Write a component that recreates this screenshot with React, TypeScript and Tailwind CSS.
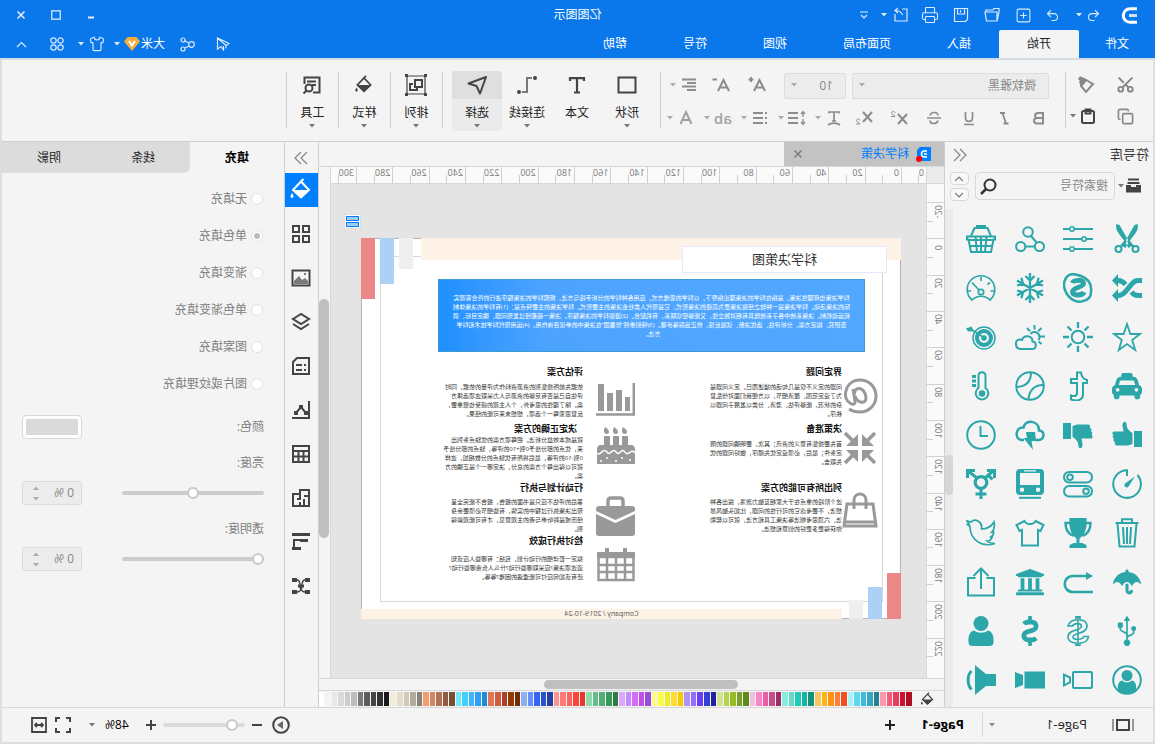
import type { ReactNode } from "react";
import { Copy, Printer, Redo2, Scissors, Shirt, SquarePlus, Undo2 } from "lucide-react";
import { FaTaxi, FaTrophy, FaUniversity, FaUsb, FaDollarSign, FaUmbrella } from "react-icons/fa";

type DrawProps = { children: ReactNode; size?: string; box?: number; sw?: number };

function Draw({ children, size = "size-6", box = 24, sw = 2 }: DrawProps) {
  return (
    <svg viewBox={`0 0 ${box} ${box}`} className={`${size} shrink-0`} fill="none" stroke="currentColor" strokeWidth={sw} aria-hidden="true">
      {children}
    </svg>
  );
}

function Caret({ className = "" }: { className?: string }) {
  return (
    <svg viewBox="0 0 6 4" className={`h-1 w-1.5 shrink-0 ${className}`} fill="currentColor" aria-hidden="true">
      <path d="M0 0h6L3 3.5z" />
    </svg>
  );
}

const solid = { fill: "currentColor", stroke: "none" };

const symbols: { name: string; art: ReactNode }[] = [
  {
    name: "scissors",
    art: (
      <>
        <path {...solid} d="M4.500 0c-1.500 4 .5 8 8 17l4 7 3-2L7.500 1zM25.500 0c1.500 4-.5 8-8 17l-4 7-3-2 12-21z" />
        <circle cx="6.500" cy="25" r="3" />
        <circle cx="23.500" cy="25" r="3" />
        <path d="M9 22.500l5-6M21 22.500l-5-6" strokeWidth="2.500" />
      </>
    ),
  },
  {
    name: "sliders",
    art: (
      <>
        <path d="M0 5h18.500M24 5h6M0 15h6M12 15h18M0 25h18.500M24 25h6" />
        <circle cx="21" cy="5" r="2.200" strokeWidth="1.600" />
        <circle cx="9" cy="15" r="2.200" strokeWidth="1.600" />
        <circle cx="21" cy="25" r="2.200" strokeWidth="1.600" />
      </>
    ),
  },
  {
    name: "nodes",
    art: (
      <>
        <circle cx="17" cy="8" r="4.800" />
        <circle cx="5.600" cy="22.500" r="4.600" />
        <circle cx="24.300" cy="22.500" r="4.600" />
        <path d="M14 12l-6 7M10.500 22.500h9" />
      </>
    ),
  },
  {
    name: "basket",
    art: (
      <>
        <path d="M5 12l3.500-8h13l3.500 8" />
        <path d="M10 2.500h10" strokeWidth="3" />
        <path d="M1 12.500h28v3h-1.500L25 28H5L2.500 15.500H1zM3 16h24M4 22h22M9.500 13l1.500 15M15 13v15M20.500 13L19 28" />
      </>
    ),
  },
  {
    name: "shuffle",
    art: (
      <>
        <path d="M0 7.500h4c3 0 5 2 7 4.500l6 7c2 2.500 4 3.500 7 3.500h1M0 22.500h4c3 0 5-1.500 6.500-3.500M16.500 11.500c2-2.500 4-4 7.500-4h1" strokeWidth="5" />
        <path {...solid} d="M24 1l6 6.500-6 6.500zM24 16l6 6.500-6 6.500z" />
      </>
    ),
  },
  {
    name: "skype",
    art: (
      <>
        <path d="M20 2c-4-2-14 0-18 11-2 5-1 12 4 15 4 2 8 .5 12-1 8-3 11-9 10-16 0-5-3-8-8-9z" strokeWidth="2.500" transform="rotate(180 15 15)" />
        <path d="M20.500 10c-1-3-10-4-11 0-.8 4.500 11 4 11 9 0 4-10 4-11.500 0" strokeWidth="5" />
      </>
    ),
  },
  {
    name: "snow",
    art: (
      <path
        d="M15 0v30M2 7.500l26 15M28 7.500l-26 15M10.500 3l4.500 4.500L19.500 3M10.500 27l4.500-4.500 4.500 4.500M2 12.500l6-1.700L6.400 4.700M28 17.500l-6 1.700 1.600 6.100M28 12.500l-6-1.700 1.600-6.100M2 17.500l6 1.700-1.600 6.100"
        strokeWidth="2.300"
      />
    ),
  },
  {
    name: "gauge",
    art: (
      <>
        <path d="M6 27A13.800 13.800 0 1124 27c-5-5-13-5-18 0z" strokeWidth="1.700" />
        <circle cx="15" cy="19" r="2.700" strokeWidth="1.700" />
        <path d="M17 17l7-7.500M15 4v4M2 18h3.500M25 18h3.500M6 9.500l2.500 2" strokeWidth="1.700" />
      </>
    ),
  },
  { name: "star", art: <path d="M15 2l3.300 10H28l-7.800 6 3 10L15 22l-8.200 6 3-10L2 12h9.700z" strokeWidth="1.800" /> },
  {
    name: "sun",
    art: (
      <>
        <circle cx="15" cy="15" r="6.300" />
        <path d="M15 0v6M15 24v6M0 15h6M24 15h6M4.500 4.500l4 4M21.500 21.500l4 4M25.500 4.500l-4 4M8.500 21.500l-4 4" strokeWidth="2.300" />
      </>
    ),
  },
  {
    name: "cloud sun",
    art: (
      <>
        <path d="M13 27c-5 0-5-7-.5-7.500 0-6 8.500-7.500 10.500-1.500C27 16.500 29.500 19 29 22c0 3-2 5-5 5z" />
        <path d="M6.500 18a5 5 0 118-6M10.500 3v4.500M0 14.500h5M3.500 6l3.300 3.300M18 6l-3 3.300M3.500 22l3-2.500" />
      </>
    ),
  },
  {
    name: "target",
    art: (
      <>
        <circle cx="12" cy="16" r="11" strokeWidth="1.500" />
        <circle cx="12" cy="16" r="7" strokeWidth="4" />
        <circle cx="12" cy="16" r="2.700" {...solid} />
        <path d="M13 15L27 6" strokeWidth="1.500" />
        <path {...solid} d="M22 9l3-5 1 1.500 4 .5-2 3.500z" />
      </>
    ),
  },
  { name: "taxi", art: <FaTaxi x="0" y="0" size={30} stroke="none" /> },
  { name: "tumblr", art: <path d="M12 1.500h4v6.500h6v4h-6v10c0 3.500 3 3.500 6 2.500v4c-8 2.500-12-.5-12-5V12H6V9c4-1 5.500-3 6-7.500z" /> },
  {
    name: "ball",
    art: (
      <>
        <circle cx="15" cy="15" r="13.800" />
        <path d="M14 1.500c0 10 5 14 14.500 14.500M2 14c9 0 14 6 14.500 14.500" />
      </>
    ),
  },
  {
    name: "thermometer",
    art: (
      <>
        <path d="M10.500 17V5c0-5 7-5 7 0v12a6.300 6.300 0 11-7 0z" />
        <circle cx="14" cy="22.500" r="3.300" {...solid} />
        <path d="M20 5.500h4M20 10h4M20 14.500h4" strokeWidth="3" />
      </>
    ),
  },
  {
    name: "thumb up",
    art: (
      <path {...solid} d="M0 11h8v16H0zM9.500 13c3-2 6-4 6-9.500C16 .5 20 1.500 19.500 6l-1 5.500H28c2 0 2 3 .5 3.500 1.200 1 1 3-.5 3.500 1 1 .5 3-1 3.500.5 1.500 0 3.500-2 3.500H14L9.500 24z" />
    ),
  },
  {
    name: "thumb down",
    art: (
      <path {...solid} transform="rotate(180 15 15)" d="M0 11h8v16H0zM9.500 13c3-2 6-4 6-9.500C16 .5 20 1.500 19.500 6l-1 5.500H28c2 0 2 3 .5 3.500 1.200 1 1 3-.5 3.500 1 1 .5 3-1 3.500.5 1.500 0 3.500-2 3.500H14L9.500 24z" />
    ),
  },
  {
    name: "storm",
    art: (
      <>
        <path d="M10 20H6c-6-1-6-9 0-9.500C6 0 20-1 21.500 7.500 29 6.500 31 18 24 20h-3" strokeWidth="2.500" />
        <path {...solid} d="M10 12h9l-1 6h3.500L12 30l1.500-9H9z" />
      </>
    ),
  },
  {
    name: "clock",
    art: (
      <>
        <circle cx="15" cy="15" r="13.800" />
        <path d="M15.500 6v10H8" />
      </>
    ),
  },
  {
    name: "timer",
    art: (
      <>
        <path d="M15 7V1.200A13.800 13.800 0 114.500 6" />
        <path {...solid} d="M7 7.500l10 7a2.200 2.200 0 01-3.500 3z" />
      </>
    ),
  },
  {
    name: "toggles",
    art: (
      <>
        <rect x="1" y="3" width="28" height="10.500" rx="5.200" />
        <rect x="1" y="17" width="28" height="10.500" rx="5.200" />
        <circle cx="23" cy="8.200" r="2.800" />
        <circle cx="7" cy="22.200" r="2.800" />
      </>
    ),
  },
  {
    name: "tram",
    art: (
      <>
        <path {...solid} fillRule="evenodd" d="M5 0h20c3 0 4 2 4 4v18c0 3-2 4-4 4H5c-2 0-4-1-4-4V4c0-2 1-4 4-4zm0 4v12h20V4zM7 18.500a2 2 0 100 4.500 2 2 0 000-4.500zm16 0a2 2 0 100 4.500 2 2 0 000-4.500zM9 1.200v1.300h12V1.200z" />
        <path d="M4 28.800h22" />
      </>
    ),
  },
  {
    name: "gender",
    art: (
      <>
        <circle cx="15" cy="13.500" r="5.800" strokeWidth="3.200" />
        <path d="M15 19v11M9.500 25h11M19 9l9-7M11 9L3 2M21 1.500h7.500V9M9 1.500H1.500V9M3.500 10.500l5-5" strokeWidth="3" />
      </>
    ),
  },
  {
    name: "trash",
    art: <path d="M3.500 5h23M10 4.500V1.200h10v3.300M5.500 5.500l2 23h15l2-23M11 9l1 17M15 9v17M19 9l-1 17" />,
  },
  {
    name: "trophy",
    art: (
      <>
        <path {...solid} d="M6.500 0h17c1 11-2 17-7 20.500V25h3c1 1 4 1.500 4 2.500V30h-17v-2.500c0-1 3-1.500 4-2.500h3v-4.500C8.500 17 5.500 11 6.500 0z" />
        <path d="M7 5H2.500c0 7 3 11 8 13M23 5h4.500c0 7-3 11-8 13" strokeWidth="2.400" />
      </>
    ),
  },
  {
    name: "shirt",
    art: <path d="M9.500 3L1.500 7l3 6L7 12v15.500h16V12l2.500 1 3-6-8-4c-1.500 4-9.500 4-11 0z" />,
  },
  {
    name: "bird",
    art: (
      <path
        strokeWidth="1.700"
        d="M2 4c3 5 8 7 12.500 7C13 4 21-.5 25 4l4-1-2 3 1.500.5-2.500 2C26 21 15 30 1 25.500c3 0 6-.5 8-2.500-3 0-4.500-2-5-3.500h2C3 18 2 16 2.500 13.500L4 14C1.500 11 1 8 2 4z"
      />
    ),
  },
  { name: "umbrella", art: <FaUmbrella x="1" y="1" size={28} stroke="none" /> },
  {
    name: "return",
    art: (
      <>
        <path d="M5 9h15c11 0 11 16 0 16H0" strokeWidth="2.600" />
        <path {...solid} d="M0 9l7-4v8z" />
      </>
    ),
  },
  { name: "bank", art: <FaUniversity x="0" y="0" size={30} stroke="none" /> },
  {
    name: "share",
    art: <path d="M9.500 11H2v17.500h26V11h-7.500M15 22V2M7.500 9L15 1.500 22.500 9" />,
  },
  { name: "usb", art: <FaUsb x="0" y="0" size={30} stroke="none" transform="rotate(-90 15 15)" /> },
  {
    name: "money",
    art: (
      <path
        strokeWidth="1.600"
        d="M13 .8h4V4c4 .2 7 2.500 8 6h-4.500c-2-3.500-9-3-9 .5 0 4 13.500 2.500 13.500 10.500 0 3.500-3.500 5.800-8 6v2.500h-4V27c-4 0-8-2-8.500-6.500h4.500c2 4 11 3.500 11 .5 0-4.500-14-3-14-10.500C6 6.500 9 4.200 13 4zM15 1v28"
      />
    ),
  },
  { name: "dollar", art: <FaDollarSign x="0" y="0" size={30} stroke="none" /> },
  {
    name: "user",
    art: (
      <>
        <circle cx="15" cy="7.500" r="7.500" {...solid} />
        <path {...solid} d="M8 14.500c4 3 10 3 14 0 4.500 1 6 6 5.500 12 0 2.500-2 3.500-4 3.500h-17c-2 0-4-1-4-3.500-.5-6 1-11 5.500-12z" />
      </>
    ),
  },
  {
    name: "account",
    art: (
      <>
        <circle cx="15" cy="15" r="13.800" />
        <circle cx="15" cy="10.500" r="5.500" {...solid} />
        <path {...solid} d="M10 15.500c3 2.500 7 2.500 10 0 4 1 4.500 5 4 9.500-5 5-13 5-18 0-.5-4.500 0-8.500 4-9.500z" />
      </>
    ),
  },
  {
    name: "camera outline",
    art: (
      <>
        <rect x="1" y="7" width="19" height="16" rx="1" />
        <path d="M23 12.500l6-3v11l-6-3z" />
      </>
    ),
  },
  {
    name: "camera",
    art: <path {...solid} d="M0 6.500h20.500v17H0zM22 10l8-3v16l-8-3z" />,
  },
  {
    name: "speaker",
    art: (
      <>
        <path {...solid} d="M0 9h10L21 0v30L10 21H0z" />
        <path d="M24.500 6c4.500 4 4.500 14 0 18.500" strokeWidth="3" />
      </>
    ),
  },
];

const paintBucket = (
  <>
    <path d="M12 3.500L20 12l-8 7.500L4 12zM12 3.500L9.500 1" />
    <path {...solid} d="M4.500 12h15L12 20zM21 15c2 3 2 4.500 0 5-2-.5-2-2 0-5z" />
  </>
);

const sideTools: { name: string; art: ReactNode }[] = [
  { name: "填充", art: paintBucket },
  { name: "图形", art: <path d="M4 4h6v6H4zM14 4h6v6h-6zM4 14h6v6H4zM14 14h6v6h-6z" /> },
  {
    name: "图片",
    art: (
      <>
        <rect x="3.500" y="4.500" width="17" height="15" />
        <path {...solid} d="M5 18v-3l3-3 3 2 3-4 5 5v3zM7 7h2v2H7z" opacity=".7" />
      </>
    ),
  },
  { name: "图层", art: <path d="M12 4l8 5-8 5-8-5zM4 14l8 5 8-5" /> },
  { name: "文档", art: <path d="M4 4h12l4 4v12H4zM7 11h2M11 11h6M7 16h2M11 16h6" /> },
  {
    name: "图表",
    art: (
      <>
        <path d="M4 3v17h17M7 15l5-6 5 6" />
        <path {...solid} d="M5 13h4v4H5zM10 7h4v4h-4zM15 13h4v4h-4z" />
      </>
    ),
  },
  { name: "表格", art: <path d="M4 4h16v16H4zM4 9h16M4 14.500h16M9.500 9v11M14.500 9v11" /> },
  { name: "布局", art: <path d="M4 4h9v4h7v12H4zM4 10h5M9 13v7M13 8v5h3M13 16v4" /> },
  {
    name: "甘特图",
    art: (
      <>
        <path d="M5 10h8M13 10h6v7" />
        <path {...solid} d="M3 3h18v3H3zM5 9h8v3H5zM12 17h9v3h-9z" />
      </>
    ),
  },
  {
    name: "思维导图",
    art: (
      <>
        <path d="M8 6c4 0 2 6 4 6s0 6-4 6M16 6c-4 0-2 6-4 6s0 6 4 6" strokeWidth="1.500" />
        <path {...solid} d="M3 4h5v4H3zM16 4h5v4h-5zM3 16h5v4H3zM16 16h5v4h-5zM9 10.500h6v3H9z" />
      </>
    ),
  },
];

const palette = [
  "#b00e20", "#d0102e", "#e73f5b", "#f65b7e", "#fa99ae", "#26808e", "#37a6bf", "#3bbdd9", "#5fd7ee", "#a7f1fd",
  "#f25022", "#ff7f3a", "#ff9217", "#fdb515", "#fdc462", "#14937f", "#17b59e", "#1dccb6", "#66d9c7", "#8aecdd",
  "#9a2f63", "#c84b8d", "#e85fa6", "#f985c8", "#f2c0de", "#5e8b17", "#78a128", "#98bc25", "#b5d34b", "#d2e290",
  "#1f22a4", "#333fd4", "#6b3df7", "#8f70f9", "#ae92f4", "#fac800", "#ffdb2c", "#ecec2e", "#fafa50", "#fdfd86",
  "#9a4bd7", "#c24fe6", "#d66df9", "#c38bfd", "#d9a7fd", "#2f7c42", "#37995a", "#52ac76", "#65bd8b", "#8fd9ab",
  "#e8382b", "#fb4338", "#fc6260", "#fd7a78", "#fd9490", "#263fa3", "#2753cc", "#3565f3", "#6690fc", "#8bb1f3",
  "#722c02", "#933b02", "#ab4128", "#cf5b40", "#e37555", "#1b8cd8", "#2e9ff6", "#41b4fc", "#43d1fc", "#6ce9fd",
  "#78502f", "#915a42", "#b07355", "#d48761", "#f49c6f", "#8a8177", "#b0ab9c", "#cfcab8", "#e3dccc", "#f3ecd8",
  "#1a1a1a", "#333333", "#454545", "#5c5c5c", "#7a7a7a", "#bdbdbd", "#cccccc", "#dadada", "#e8e8e8", "#f4f4f4", "#ffffff",
];

function TitleBar() {
  const tabs = ["插入", "页面布局", "视图", "符号", "帮助"];
  const btn = "flex h-5 items-center justify-center";
  return (
    <header className="border-b-2 border-[#d5dbe2] bg-[#0a77eb] text-white">
      <div className="relative flex h-[30px] items-center pl-[17px] pr-[10px]">
        <Draw size="size-[17px]" box={17} sw={3}>
          <path d="M1 1.800h7a6.700 6.700 0 010 13.400H1" />
          <path d="M1 8.500h8" opacity=".8" />
        </Draw>
        <div className="ml-[19px] flex items-center text-[#d9ebff]">
          <button aria-label="撤销" className={`${btn} w-4`}><Undo2 size={15} strokeWidth={1.700} /></button>
          <button aria-label="撤销列表" className={`${btn} w-[14px]`}><Caret /></button>
          <button aria-label="重做" className={`${btn} ml-[11px] w-4`}><Redo2 size={15} strokeWidth={1.700} /></button>
          <button aria-label="新建" className={`${btn} ml-[6px] w-[31px]`}><SquarePlus size={17} strokeWidth={1.500} /></button>
          <button aria-label="打开" className={`${btn} w-[31px]`}>
            <Draw size="size-4" box={16} sw={1.200}><path d="M3 14h10.500l1.500-9H3zM3 14L1 5V1.500h5l1 1.500h7v2" /></Draw>
          </button>
          <button aria-label="保存" className={`${btn} w-[31px]`}>
            <Draw size="size-4" box={16} sw={1.200}><path d="M1.500 1.500h13v13h-11l-2-2zM4.500 1.500V7h7V1.500M8.500 3v2.500" /></Draw>
          </button>
          <button aria-label="打印" className={`${btn} w-[31px]`}><Printer size={18} strokeWidth={1.500} /></button>
          <button aria-label="导出" className={`${btn} w-[28px]`}>
            <Draw size="size-4" box={16} sw={1.200}><path d="M7 2H2v12h12V7M6.500 8c1-3 4-4.500 7.500-4.500M11 1l3 2.500L11 6" /></Draw>
          </button>
          <button aria-label="导出列表" className={btn}><Caret /></button>
          <button aria-label="更多" className={`${btn} ml-[9px] w-4`}>
            <Draw size="size-2" box={8} sw={1.200}><path d="M0 1h8M1 4l3 3 3-3" /></Draw>
          </button>
        </div>
        <h1 className="pointer-events-none absolute inset-x-0 text-center text-[12px]">亿图图示</h1>
        <div className="ml-auto flex items-center gap-[13px] text-[#e6f2ff]">
          <button aria-label="最小化" className={`${btn} w-[22px]`}><Draw size="size-[10px]" box={10} sw={2}><path d="M2 7.500h6" /></Draw></button>
          <button aria-label="最大化" className={`${btn} w-[22px]`}><Draw size="size-[10px]" box={10} sw={1.200}><path d="M.8.800h8.400v8.400H.8z" /></Draw></button>
          <button aria-label="关闭" className={`${btn} w-[22px]`}><Draw size="size-[10px]" box={10} sw={1.500}><path d="M1.500 1.500l7 7M8.500 1.500l-7 7" /></Draw></button>
        </div>
      </div>
      <div className="flex h-7 items-center pr-[12px] text-[12px]">
        <nav className="flex h-7">
          <a href="#file" className="flex w-[76px] items-center justify-center">文件</a>
          <a href="#home" className="flex items-center rounded-t-xs bg-[#f4f4f4] px-7 text-[#222]">开始</a>
          {tabs.map((tab) => (
            <a key={tab} href={`#${tab}`} className="flex items-center px-7">{tab}</a>
          ))}
        </nav>
        <div className="ml-auto flex items-center text-[#d9ebff]">
          <button aria-label="发送" className={btn}>
            <Draw size="size-[14px]" box={14} sw={1.200}><path d="M12.500 1L1 6.500l3 2L12.500 1v11L9 9.500 6.500 13V9M4 8.500v3" /></Draw>
          </button>
          <button aria-label="共享" className={`${btn} ml-[21px]`}>
            <Draw size="size-[15px]" box={15} sw={1.200}><circle cx="3.500" cy="7.500" r="2.800" /><circle cx="12" cy="3" r="2" /><circle cx="12" cy="12" r="2" /><path d="M6 6l4-2M6 9l4 2" /></Draw>
          </button>
          <a href="#user" className="ml-[15px] flex items-center gap-px text-white">
            大米
            <Draw size="size-4" box={16}>
              <path d="M3.500 1h9L16 5.500 8 15 0 5.500z" fill="#f6ad3c" stroke="none" />
              <path d="M5 5l3 4.500L11 5" stroke="#fff" />
            </Draw>
          </a>
          <button aria-label="用户菜单" className={`${btn} ml-1`}><Caret /></button>
          <button aria-label="皮肤" className={`${btn} ml-[9px]`}><Shirt size={16} strokeWidth={1.700} /></button>
          <button aria-label="皮肤列表" className={`${btn} ml-[5px]`}><Caret /></button>
          <button aria-label="应用" className={`${btn} ml-[13px]`}>
            <Draw size="size-4" box={16} sw={1.200}>
              <circle cx="4.500" cy="4.500" r="2.700" /><circle cx="11.500" cy="4.500" r="2.700" /><circle cx="4.500" cy="11.500" r="2.700" /><circle cx="11.500" cy="11.500" r="2.700" />
            </Draw>
          </button>
          <button aria-label="收起功能区" className={`${btn} ml-[17px] w-[20px]`}>
            <Draw size="size-[11px]" box={11} sw={1.200}><path d="M1 8l4.500-4.500L10 8" /></Draw>
          </button>
        </div>
      </div>
    </header>
  );
}

function Divider() {
  return <div className="mt-3 h-14 w-px shrink-0 bg-[#cfcfcf]" />;
}

function BigButton({ label, caret = true, active = false, wide = "w-[50px]", children }: { label: string; caret?: boolean; active?: boolean; wide?: string; children: ReactNode }) {
  return (
    <button className={`${wide} mt-[11px] flex h-[60px] flex-col items-center text-[12px] text-[#222] ${active ? "rounded-sm bg-[#ebebeb]" : ""}`}>
      <span className={`flex h-7 w-full items-center justify-center text-[#444] ${active ? "rounded-t-sm bg-[#dfdfdf]" : ""}`}>{children}</span>
      <span className="mt-[5px] leading-[18px]">{label}</span>
      {caret && <Caret className="mt-0.5 text-[#777]" />}
    </button>
  );
}

function FormatButton({ label, caret = false, wide = "w-[35px]", children }: { label: string; caret?: boolean; wide?: string; children: ReactNode }) {
  return (
    <button aria-label={label} className={`${wide} flex h-6 shrink-0 items-center gap-[3px] text-[#8c8c8c] ${caret ? "" : "justify-center"}`}>
      <span className="flex w-5 justify-center">{children}</span>
      {caret && <Caret className="text-[#aaa]" />}
    </button>
  );
}

function Ribbon() {
  const select = "h-[26px] appearance-none rounded-xs border border-[#dcdcdf] bg-[#ececec] pl-3 text-[12px] text-[#888]";
  return (
    <section className="flex h-[82px] border-b border-[#cfcfcf] bg-[#f4f4f4]">
      <div className="grid w-[87px] grid-cols-[44px_1fr] grid-rows-2 content-center gap-y-1 py-[11px] pl-[5px] text-[#888]">
        <button aria-label="剪切" className="flex items-center justify-center"><Scissors size={19} strokeWidth={2.500} className="-rotate-90" /></button>
        <button aria-label="格式刷" className="flex items-center pl-2">
          <Draw size="size-[18px]" box={18}><path d="M3 8l7-4 5 6-5 6z" /><path {...solid} d="M9 4l4-3 4 5-2 5zM13 2l3-2 2 3-2 2z" /></Draw>
        </button>
        <button aria-label="复制" className="flex items-center justify-center"><Copy size={17} strokeWidth={2.300} className="-scale-x-100" /></button>
        <button aria-label="粘贴" className="flex items-center gap-1 pl-2 text-[#444]">
          <Draw size="size-4" box={16}><rect x="2" y="3" width="12" height="12" rx="1.500" /><path d="M5.500 1.500h5v4h-5z" /></Draw>
          <Caret className="text-[#777]" />
        </button>
      </div>
      <Divider />
      <div className="w-[404px] pl-2 pt-3">
        <div className="flex h-[26px] items-center pl-2">
          <div className="relative">
            <select aria-label="字体" className={`${select} w-[197px]`}>
              <option>微软雅黑</option>
            </select>
            <Caret className="pointer-events-none absolute right-[7px] top-[11px] text-[#aaa]" />
          </div>
          <div className="relative ml-[6px]">
            <select aria-label="字号" className={`${select} w-[62px]`}>
              <option>10</option>
            </select>
            <Caret className="pointer-events-none absolute right-[7px] top-[11px] text-[#aaa]" />
          </div>
          <div className="ml-[9px] flex items-center">
            <FormatButton label="增大字号" wide="w-9"><Draw size="size-[18px]" box={18}><path d="M1 15L6.500 4 12 15M3 11.500h7M12.500 3.500h5M15 1v5" /></Draw></FormatButton>
            <FormatButton label="减小字号" wide="w-9"><Draw size="size-[18px]" box={18}><path d="M1 15L6.500 4 12 15M3 11.500h7M13 3.500h4.500" /></Draw></FormatButton>
            <FormatButton label="对齐" wide="w-[37px] pl-1" caret><Draw size="size-4" box={16}><path d="M1 2.500h14M1 6h9M1 9.500h14M1 13h9" /></Draw></FormatButton>
          </div>
        </div>
        <div className="mt-2 flex h-6 items-center">
          <FormatButton label="加粗"><Draw size="size-4" box={16}><path d="M4 3h5c4 0 4 5 0 5H4zM4 8h6c4 0 4 5.500 0 5.500H4z" /></Draw></FormatButton>
          <FormatButton label="斜体"><Draw size="size-4" box={16}><path d="M7 3h5M3.500 13.500h5M9.500 3L6 13.500" strokeWidth="1.800" /></Draw></FormatButton>
          <FormatButton label="下划线"><Draw size="size-4" box={16}><path d="M4.500 2v6c0 4.500 7 4.500 7 0V2M3 14.500h10" strokeWidth="1.700" /></Draw></FormatButton>
          <FormatButton label="删除线"><Draw size="size-4" box={16}><path d="M12 5.500C11 1.500 4 1.500 4 5.500M12 10.500c0 4-7 4-8 0M1 8h14" strokeWidth="1.700" /></Draw></FormatButton>
          <FormatButton label="上标"><Draw size="size-[18px]" box={18}><path d="M1 5l9 10M10 5L1 15" /><path d="M13 4c0-2 3.500-2 3.500 0 0 1-3 2-3.500 3.500h4" strokeWidth="1" /></Draw></FormatButton>
          <FormatButton label="下标"><Draw size="size-[18px]" box={18}><path d="M1 3l9 10M10 3L1 13" /><path d="M13 11.500c0-2 3.500-2 3.500 0 0 1-3 2-3.500 3.500h4" strokeWidth="1" /></Draw></FormatButton>
          <div className="flex pl-[3px]">
            <FormatButton label="文字方向" wide="w-[37px]" caret><Draw size="size-4" box={16}><path d="M3 3.500V2h10v1.500M8 2v9M6 11h4M2 15c3-2.500 9-2.500 12 0" strokeWidth="1.700" /></Draw></FormatButton>
            <FormatButton label="行距" wide="w-[37px]" caret><Draw size="size-[18px]" box={18}><path d="M8 4h10M8 9h10M8 14h10" /><path d="M3 3v5M3 10v5M1 5l2-2.500L5 5M1 13l2 2.500L5 13" strokeWidth="1.300" /></Draw></FormatButton>
            <FormatButton label="项目符号" wide="w-[37px]" caret><Draw size="size-4" box={16}><path d="M5 3h10M5 8h10M5 13h10M1 3h2M1 8h2M1 13h2" /></Draw></FormatButton>
            <FormatButton label="高亮" wide="w-[37px]" caret><span className="text-[15px] font-semibold leading-none text-[#a3a3a3]">ab</span></FormatButton>
            <FormatButton label="字体颜色" wide="w-[37px]" caret><Draw size="size-4" box={16}><path d="M2.500 14L8 2l5.500 12M4.500 10h7" opacity=".8" /></Draw></FormatButton>
          </div>
        </div>
      </div>
      <Divider />
      <div className="flex pl-2 pr-[9px]">
        <BigButton label="形状"><Draw size="size-5" box={20}><path d="M1.500 2.500h17v15h-17z" /></Draw></BigButton>
        <BigButton label="文本" caret={false}><Draw size="size-5" box={20} sw={2.200}><path d="M3 6V3.200h14V6M10 3v15M7 17.500h6" /></Draw></BigButton>
        <BigButton label="连接线">
          <Draw size="size-5" box={20}><path d="M5 3h5v14h5" opacity=".7" /><circle cx="2" cy="3" r="2" {...solid} /><circle cx="18" cy="17" r="2" {...solid} /></Draw>
        </BigButton>
        <BigButton label="选择" active><Draw size="size-[22px]" box={22}><path d="M2 3l17.500 6.500-8 2.500-3.500 7.500z" strokeLinejoin="round" /></Draw></BigButton>
      </div>
      <Divider />
      <BigButton label="排列" wide="w-[51px]">
        <Draw size="size-[22px]" box={22} sw={1.200}><path d="M2 2h18v18H2z" /><path d="M5 6h7v7H5zM14 10h3v6h-7v-2" strokeWidth="2" /><path {...solid} d="M0 0h3v3H0zM19 0h3v3h-3zM0 19h3v3H0zM19 19h3v3h-3z" /></Draw>
      </BigButton>
      <Divider />
      <BigButton label="样式" wide="w-[51px]"><Draw size="size-5">{paintBucket}</Draw></BigButton>
      <Divider />
      <BigButton label="工具" wide="w-[51px]">
        <Draw size="size-5" box={20}><path d="M9 17.500H2.500v-15h15V9M6 6.500h9M6 10h4" /><circle cx="13" cy="13" r="3.500" /><path d="M15.500 15.500l3 3" /></Draw>
      </BigButton>
      <Divider />
    </section>
  );
}

function SymbolPanel() {
  const step = "flex h-[13px] w-[19px] items-center justify-center rounded-sm border border-[#d8d8d8] bg-[#f8f8f8] text-[#777]";
  return (
    <aside className="flex w-[209px] shrink-0 flex-col border-r border-[#cfcfcf]">
      <div className="flex h-[26px] items-center justify-between pl-1 pr-2 text-[13px] text-[#333]">
        <h2>符号库</h2>
        <button aria-label="收起符号库" className="text-[#888]"><Draw size="size-[14px]" box={14} sw={1.300}><path d="M7 1L1 7l6 6M13 1L7 7l6 6" /></Draw></button>
      </div>
      <div className="flex h-[41px] items-start pl-3 pt-1">
        <button aria-label="符号分类" className="mt-[6px] flex items-center gap-0.5 text-[#444]">
          <Draw size="size-[15px]" box={15}><path d="M2 1.500h11M1.500 5h12" strokeWidth="1.800" /><path {...solid} d="M0 7h5v2h5V7h5v7.500H0z" /></Draw>
          <Caret className="text-[#777]" />
        </button>
        <div className="ml-[3px] flex h-7 w-[140px] items-center rounded-sm border border-[#d8d8d8] pr-1">
          <input aria-label="搜索符号" placeholder="搜索符号" className="w-full min-w-0 bg-transparent pl-[6px] text-[12px] outline-none placeholder:text-[#888]" />
          <button aria-label="搜索" className="text-[#333]"><Draw size="size-[17px]" box={17}><circle cx="7" cy="7" r="5.500" /><path d="M11 11l5 5" strokeWidth="2.500" /></Draw></button>
        </div>
        <div className="ml-[6px] flex flex-col gap-[3px]">
          <button aria-label="上一个" className={step}><Draw size="size-2" box={8} sw={1.200}><path d="M0 6l4-4 4 4" /></Draw></button>
          <button aria-label="下一个" className={step}><Draw size="size-2" box={8} sw={1.200}><path d="M0 2l4 4 4-4" /></Draw></button>
        </div>
      </div>
      <div className="flex flex-1">
        <div className="grid flex-1 grid-cols-4 content-start pl-0.5 pr-1 pt-[5px] text-[#2ba6a9]">
          {symbols.map((symbol) => (
            <button key={symbol.name} aria-label={symbol.name} className="flex h-[49px] items-center justify-center">
              <svg viewBox="0 0 30 30" className="size-[30px]" fill="none" stroke="currentColor" strokeWidth="2" aria-hidden="true">
                {symbol.art}
              </svg>
            </button>
          ))}
        </div>
        <div className="w-2 bg-[#ebebeb] pt-[246px]">
          <div className="h-10 rounded-full bg-[#d6d6d6]" />
        </div>
      </div>
    </aside>
  );
}

const articles = [
  {
    title: "界定问题",
    head: "left-[59px] top-[128px]",
    body: "left-[59px] top-[145px]",
    lines: ["问题的定义不仅是几句话的描述而已，定义问题是", "为了设定范围、厘清细节，以方便我们面对纷乱复", "杂的状况，能够评估、澄清、分类以发展子问题以", "秩序。"],
  },
  {
    title: "决策准备",
    head: "left-[59px] top-[185px]",
    body: "left-[59px] top-[202px]",
    lines: ["首先要搜集有意义的资讯；其次，要明确问题的限", "定条件；最后，必须设定优先顺序，做好问题的优", "先取舍。"],
  },
  {
    title: "列出所有可能的方案",
    head: "left-[59px] top-[244px]",
    body: "left-[59px] top-[260px]",
    lines: ["这个阶段的重点在于大家相互脑力激荡，提出各种", "想法，不要考虑它的可行性的问题，比如头脑风暴", "法、六顶思考帽法等决策工具和方法，就可以帮助", "你获得更多更好的创意和想法。"],
  },
  {
    title: "评估方案",
    head: "left-[318px] top-[128px]",
    body: "left-[318px] top-[145px]",
    lines: ["依据先前所搜集到的资源资料作为评量的依据，同时", "评估自己是否有足够的资源与人力采取这项选择方", "案。除了理性的思考外，个人主观的感受也很重要，", "反复思索每一个选项，想想未来可能的结果。"],
  },
  {
    title: "决定正确的方案",
    head: "left-[324px] top-[185px]",
    body: "left-[318px] top-[198px]",
    lines: ["就是成本效益分析法。把每项方案的优缺点条列出", "来，优点的部分给予0到+10的评等，缺点的部分给予", "0到-10的评等，最后将所有优缺点的分数相加，这样", "就可以得出每个方案的总分，决定哪一个是正确的方", "案。"],
  },
  {
    title: "行动计划与执行",
    head: "left-[318px] top-[244px]",
    body: "left-[318px] top-[260px]",
    lines: ["事后的评估不应只是书面的报告，报告不能完全呈", "现出决策执行过程中的实情，有些细节必须要亲身", "经历或是聆听参与者的主观意见，才有可能观察得", "到。"],
  },
  {
    title: "检讨执行成效",
    head: "left-[318px] top-[297px]",
    body: "left-[318px] top-[317px]",
    lines: ["拟定一套详细的行动计划，包括：有哪些人应该知", "道这项决策?应采取哪些行动?什么人负责哪些行动?", "还有该如何应付可能遭遇的困难?等等。"],
  },
];

const introLines = [
  "科学决策也称理性决策，是指在科学的决策理论指导下，以科学的思维方式，应用各种科学的分析手段与方法，按照科学的决策程序进行的符合客观实",
  "际的决策活动。科学决策是一种较之经验决策更为高级的决策形式，它是现代人类社会决策的主要形式。科学决策的主要特点是：(1)有科学的决策体制",
  "和运动机制。决策系统中各子系统既具有相对独立性，又能够密切联系，有机配合。(2)遵循科学的决策程序。决策一般都经过发现问题、确定目标、调",
  "查研究、拟定方案、分析评估、选优决断、试验反馈、修正追踪等步骤。(3)特别重视“智囊团”在决策中的参谋咨询作用。(4)运用现代科学技术和科学",
  "方法。",
];

function Diagram() {
  return (
    <article className="relative ml-[25px] mt-[54px] h-[381px] w-[540px] shrink-0 bg-white outline -outline-offset-1 outline-[#b5b5b5]">
      <div className="absolute left-[18px] top-[18px] h-[346px] w-[503px] border border-[#d8d8d8]" />
      <div className="absolute left-0 top-0 h-[22px] w-[480px] bg-[#fef2e6]" />
      <div className="absolute left-[488px] top-0 h-[31px] w-[14px] bg-[#efefef]" />
      <div className="absolute left-[507px] top-0 h-[46px] w-[14px] bg-[#abd2f6]" />
      <div className="absolute left-[526px] top-0 h-[61px] w-[14px] bg-[#eb8787]" />
      <div className="absolute bottom-0 left-0 h-[46px] w-[14px] bg-[#eb8787]" />
      <div className="absolute bottom-0 left-[19px] h-[32px] w-[14px] bg-[#abd2f6]" />
      <div className="absolute bottom-0 left-[38px] h-[19px] w-[14px] bg-[#efefef]" />
      <h2 className="absolute left-[14px] top-2 flex h-[27px] w-[205px] items-center justify-center border border-[#e6e9fa] bg-white text-[13px] text-[#333]">
        科学决策图
      </h2>
      <div className="absolute left-[36px] top-[41px] flex h-[73px] w-[427px] flex-col items-center border border-[#3b9ad2] bg-linear-to-r from-[#52a7ff] from-0% via-[#4ca3ff] via-75% to-[#1e90ff] pt-[14px] text-[6px] leading-[9px] text-white">
        {introLines.map((line) => (
          <p key={line} className="whitespace-nowrap">{line}</p>
        ))}
      </div>
      {articles.map((item) => (
        <section key={item.title}>
          <h3 className={`absolute ${item.head} whitespace-nowrap text-[9px] font-bold leading-[12px] text-[#111]`}>{item.title}</h3>
          <div className={`absolute ${item.body} whitespace-nowrap text-[6px] leading-[9px] text-[#333]`}>
            {item.lines.map((line) => (
              <p key={line}>{line}</p>
            ))}
          </div>
        </section>
      ))}
      <div className="absolute left-[23px] top-[140px] text-[#999]">
        <Draw size="size-[36px]" box={36} sw={3}>
          <path d="M25 11l-2 12c-.5 4 3 4 5 2 3-2 5-6 4.500-10C31 6 25 2 18 2 9 2 2 9 2 18s7 16 16 16c4 0 8-1 11-3" />
          <path d="M23.500 16c0-4-2-5.500-4.500-5.500-4 0-7 5-7 9.500 0 6 8 6 11-2" />
        </Draw>
      </div>
      <div className="absolute left-[24px] top-[193px] text-[#999]">
        <Draw size="size-[34px]" box={34} sw={3.500}>
          <path d="M2 2l9 9M32 2l-9 9M2 32l9-9M32 32l-9-9" />
          <path {...solid} d="M15 3v12H3zM19 3v12h12zM15 31V19H3zM19 31V19h12z" />
        </Draw>
      </div>
      <div className="absolute left-[23px] top-[254px] text-[#999]">
        <Draw size="size-[36px]" box={36} sw={3}>
          <path d="M5 12h26l3 22H2zM3 30h30M12 17V8c0-8 12-8 12 0v9" />
        </Draw>
      </div>
      <div className="absolute left-[266px] top-[142px] text-[#999]">
        <Draw size="size-[39px]" box={39}>
          <path d="M1.200 3v31.500H39" strokeWidth="2.500" />
          <path {...solid} d="M5 17h5v14H5zM13 10h6v21h-6zM22 13h6v18h-6zM31 4h6v27h-6z" />
        </Draw>
      </div>
      <div className="absolute left-[266px] top-[189px] text-[#999]">
        <Draw size="size-[38px]" box={38}>
          <path {...solid} d="M7 9h6v10H7zM16 9h6v10h-6zM25 9h6v10h-6zM12 0c2 4 1 7-2 7s-3-4 2-7zM21 0c2 4 1 7-2 7s-3-4 2-7zM30 0c2 4 1 7-2 7s-3-4 2-7zM4 18h30c3 0 4 2 4 5v14H0V23c0-3 1-5 4-5z" />
          <path d="M0 26c4-6 7 5 10-1 4-5 5 5 9 0 4-5 6 5 9 0 4-5 7 5 10 1M4 33h2M12 31h2M18 34h2M27 31h2M33 34h2" stroke="#fff" strokeWidth="1.500" />
        </Draw>
      </div>
      <div className="absolute left-[266px] top-[258px] text-[#999]">
        <Draw size="size-[40px]" box={40}>
          <path d="M12 11V5c0-2 1-3 3-3h9c2 0 3 1 3 3v6" strokeWidth="3.500" />
          <path {...solid} d="M3 10h33c2 0 3 1 3 3v2L19.500 24 0 15v-2c0-2 1-3 3-3zM0 18l19.500 9L39 18v19c0 2-1 3-3 3H3c-2 0-3-1-3-3z" />
        </Draw>
      </div>
      <div className="absolute left-[266px] top-[308px] text-[#999]">
        <Draw size="size-[38px]" box={38} sw={2.500}>
          <path d="M1.500 11h35v23h-35zM1.500 19h35M1.500 26h35M10 11v23M19 11v23M28 11v23" />
          <path {...solid} d="M0 6h38v5H0zM8 2h4v7H8zM26 2h4v7h-4z" />
        </Draw>
      </div>
      <p className="absolute bottom-0 left-[59px] h-[10px] w-[481px] bg-[#fef2e6] text-center text-[7px] leading-[10px] text-[#555]">Company / 2019-10-24</p>
      <button aria-label="页面选项" className="absolute -right-[17px] -top-6 flex h-[15px] w-[17px] flex-col items-center justify-center gap-px border border-[#ddd] bg-white">
        <span className="block h-[5px] w-[13px] border border-[#0080ff] bg-[#9fcbf5]" />
        <span className="block h-[5px] w-[13px] border border-[#0080ff] bg-[#9fcbf5]" />
      </button>
    </article>
  );
}

function Workspace() {
  const across = Array.from({ length: 15 }, (_, i) => i * 20);
  const down = [-20, 0, 20, 40, 60, 80, 100, 120, 140, 160, 180, 200, 220];
  return (
    <main className="flex min-w-0 flex-1 flex-col">
      <div className="flex h-[25px] border-b border-[#d8d8d8]">
        <div className="flex w-[160px] items-center bg-[#c3c3c3] pl-[13px] pr-[9px] text-[12px] text-[#0080ff]">
          <span className="relative">
            <Draw size="size-[14px]" box={14}>
              <path {...solid} d="M0 0h11l3 3v11H0z" />
              <path d="M4 4h2.500a2.800 2.800 0 010 6H4M4 7h3" stroke="#fff" strokeWidth="1.500" />
            </Draw>
            <i className="absolute -bottom-px -right-px size-[6px] rounded-full bg-[#f00]" />
          </span>
          <a href="#doc" className="ml-2">科学决策</a>
          <button aria-label="关闭文档" className="ml-auto text-[#777]"><Draw size="size-[10px]" box={10} sw={1.300}><path d="M1.500 1.500l7 7M8.500 1.500l-7 7" /></Draw></button>
        </div>
      </div>
      <div className="flex flex-1">
        <div className="flex min-w-0 flex-1 flex-col">
          <div className="flex h-[17px] border-b border-[#d8d8d8] bg-[#fafafa] text-[9px] leading-[12px] text-[#777]">
            <div className="w-[18px] border-r border-[#d8d8d8] bg-[#ebebeb]" />
            <div className="relative w-[24px] pl-0.5">
              0<i className="absolute bottom-0 left-[7px] h-2 border-l border-[#d0d0d0]" />
            </div>
            {across.map((n) => (
              <div key={n} className="relative flex-1 border-l border-[#d0d0d0] pl-0.5">
                {n}<i className="absolute bottom-0 left-1/2 h-2 border-l border-[#d0d0d0]" />
              </div>
            ))}
            <div className="relative w-[26px] border-l border-[#d0d0d0] pl-0.5">
              300<i className="absolute bottom-0 left-[17px] h-2 border-l border-[#d0d0d0]" />
            </div>
          </div>
          <div className="flex flex-1">
            <div className="flex w-[18px] flex-col border-r border-[#d8d8d8] bg-[#fafafa] pb-1 text-[9px] leading-[12px] text-[#777]">
              <div className="h-[18px]" />
              {down.map((n) => (
                <div key={n} className="relative flex-1 border-t border-[#d0d0d0] pt-0.5">
                  <span className="rotate-180 [writing-mode:vertical-rl]">{n}</span>
                  <i className="absolute right-0 top-1/2 w-[6px] border-t border-[#d0d0d0]" />
                </div>
              ))}
            </div>
            <div className="flex flex-1 items-start overflow-hidden bg-[#e4e4e4]">
              <Diagram />
            </div>
          </div>
        </div>
        <div className="w-3 border-l border-[#d8d8d8] pt-[132px]">
          <div className="mx-auto h-[239px] w-[10px] rounded-full bg-[#bfbfbf]" />
        </div>
      </div>
      <div className="h-[13px] border-y border-[#d8d8d8] pt-px">
        <div className="ml-[206px] h-[9px] w-[194px] rounded-full bg-[#bfbfbf]" />
      </div>
      <div className="flex h-4 items-center">
        <button aria-label="填充颜色" className="flex w-8 justify-center text-[#444]"><Draw size="size-[15px]">{paintBucket}</Draw></button>
        <div className="flex h-[14px] flex-1 gap-px">
          {palette.map((color) => (
            <button key={color} aria-label={color} className="flex-1" style={{ backgroundColor: color }} />
          ))}
        </div>
      </div>
    </main>
  );
}

function Spinner({ label }: { label: string }) {
  return (
    <div className="flex h-6 w-[60px] items-center rounded-xs border border-[#dcdcdf] bg-[#ececec] pr-[10px] text-[#aaa]">
      <input aria-label={label} defaultValue="0 %" className="w-full min-w-0 bg-transparent pl-[7px] text-[12px] text-[#888] outline-none" />
      <span className="flex flex-col gap-[7px]">
        <button aria-label={`${label}增加`}><Caret className="block rotate-180" /></button>
        <button aria-label={`${label}减少`}><Caret className="block" /></button>
      </span>
    </div>
  );
}

const sliderStyle =
  "h-3 appearance-none bg-transparent [&::-webkit-slider-runnable-track]:h-1 [&::-webkit-slider-runnable-track]:rounded-full [&::-webkit-slider-runnable-track]:bg-[#ccc] [&::-webkit-slider-thumb]:-mt-1 [&::-webkit-slider-thumb]:size-3 [&::-webkit-slider-thumb]:appearance-none [&::-webkit-slider-thumb]:rounded-full [&::-webkit-slider-thumb]:border-2 [&::-webkit-slider-thumb]:border-[#c8c8c8] [&::-webkit-slider-thumb]:bg-white";

function FillPanel() {
  const fills = ["无填充", "单色填充", "渐变填充", "单色渐变填充", "图案填充", "图片或纹理填充"];
  return (
    <aside className="flex shrink-0 border-l border-[#cfcfcf]">
      <div className="flex w-[33px] flex-col items-center">
        <button aria-label="收起面板" className="flex h-[31px] items-center text-[#888]"><Draw size="size-[14px]" box={14} sw={1.300}><path d="M1 1l6 6-6 6M7 1l6 6-6 6" /></Draw></button>
        <div className="flex w-full flex-col gap-[10px] text-[#444]">
          {sideTools.map((tool, index) => (
            <button key={tool.name} aria-label={tool.name} className={`flex h-[34px] items-center justify-center ${index === 0 ? "bg-[#0080ff] text-white" : ""}`}>
              <Draw size="size-6">{tool.art}</Draw>
            </button>
          ))}
        </div>
      </div>
      <div className="w-[283px] border-l border-[#cfcfcf] text-[12px] text-[#808080]">
        <div className="grid h-[31px] grid-cols-3 text-[#222]">
          <button className="font-bold text-black">填充</button>
          <button className="rounded-bl-md bg-[#dcdcdc]">线条</button>
          <button className="bg-[#dcdcdc]">阴影</button>
        </div>
        <div className="flex flex-col pl-[21px] pt-[7px]">
          {fills.map((fill) => (
            <label key={fill} className="flex h-[37px] items-center gap-1">
              <input type="radio" name="fill" defaultChecked={fill === "单色填充"} className="size-3 appearance-none rounded-full border border-[#e0e0e0] bg-white checked:border-[3px] checked:border-white checked:bg-[#bbb] checked:outline checked:-outline-offset-1 checked:outline-[#e0e0e0]" />
              {fill}
            </label>
          ))}
        </div>
        <div className="flex flex-col pl-[20px] pr-5">
          <div className="mt-[13px] flex h-6 items-center justify-between">
            <span>颜色:</span>
            <button aria-label="颜色" className="h-6 w-[60px] rounded-sm border border-[#d8d8d8] bg-white p-[3px]"><span className="block h-full bg-[#dadada]" /></button>
          </div>
          <label htmlFor="brightness" className="mt-[15px] leading-[18px]">亮度:</label>
          <div className="mt-[9px] flex h-6 items-center justify-between">
            <input id="brightness" type="range" defaultValue={50} className={`${sliderStyle} w-[142px]`} />
            <Spinner label="亮度值" />
          </div>
          <label htmlFor="opacity" className="mt-[15px] leading-[18px]">透明度:</label>
          <div className="mt-[9px] flex h-6 items-center justify-between">
            <input id="opacity" type="range" defaultValue={0} className={`${sliderStyle} w-[142px]`} />
            <Spinner label="透明度值" />
          </div>
        </div>
      </div>
    </aside>
  );
}

function StatusBar() {
  return (
    <footer className="flex h-[35px] items-center border-t border-[#d8d8d8] pl-[19px] pr-[29px] text-[12px] text-[#222]">
      <button aria-label="页面视图" className="text-[#444]"><Draw size="size-[22px]" box={22}><path d="M5 6h12v10H5z" /><path d="M1 5v12M21 5v12" strokeWidth="1.500" opacity=".7" /></Draw></button>
      <button className="ml-[25px] flex items-center">
        <span className="w-[92px] text-left text-[13px]">Page-1</span>
        <Caret className="text-[#888]" />
      </button>
      <div className="ml-[6px] h-6 w-px bg-[#d8d8d8]" />
      <a href="#page-1" className="ml-[18px] text-[13px] font-bold text-black">Page-1</a>
      <button aria-label="新建页面" className="ml-[26px]"><Draw size="size-[10px]" box={10}><path d="M0 5h10M5 0v10" /></Draw></button>
      <div className="ml-auto flex items-center text-[#444]">
        <button aria-label="播放"><Draw size="size-[18px]" box={18}><circle cx="9" cy="9" r="7.800" /><path {...solid} d="M7 5l6 4-6 4z" opacity=".8" /></Draw></button>
        <button aria-label="缩小" className="ml-[10px]"><Draw size="size-[10px]" box={10}><path d="M0 5h10" /></Draw></button>
        <input aria-label="缩放" type="range" defaultValue={10} className={`${sliderStyle} ml-[7px] w-[82px] [&::-webkit-slider-runnable-track]:bg-[#dcdcdc]`} />
        <button aria-label="放大" className="ml-[7px]"><Draw size="size-[10px]" box={10}><path d="M0 5h10M5 0v10" /></Draw></button>
        <button className="ml-[17px] flex items-center gap-[10px] text-black">48%<Caret className="text-[#777]" /></button>
        <button aria-label="全屏" className="ml-[18px]"><Draw size="size-4" box={16}><path d="M1 5V1h4M11 1h4v4M15 11v4h-4M5 15H1v-4" /></Draw></button>
        <button aria-label="适合宽度" className="ml-2"><Draw size="size-4" box={16} sw={1.800}><path d="M1 1h14v14H1zM4 8h8M6 6L4 8l2 2M10 6l2 2-2 2" /></Draw></button>
      </div>
    </footer>
  );
}

// The whole window is drawn flipped left to right.
export default function App() {
  return (
    <div className="flex min-h-screen w-full -scale-x-100 flex-col overflow-hidden bg-[#f4f4f4] font-['Open_Sans','Noto_Sans_CJK_SC',sans-serif]">
      <TitleBar />
      <div className="flex flex-1 flex-col border-x-2 border-b-2 border-[#dedede]">
        <Ribbon />
        <div className="flex flex-1">
          <SymbolPanel />
          <Workspace />
          <FillPanel />
        </div>
        <StatusBar />
      </div>
    </div>
  );
}
